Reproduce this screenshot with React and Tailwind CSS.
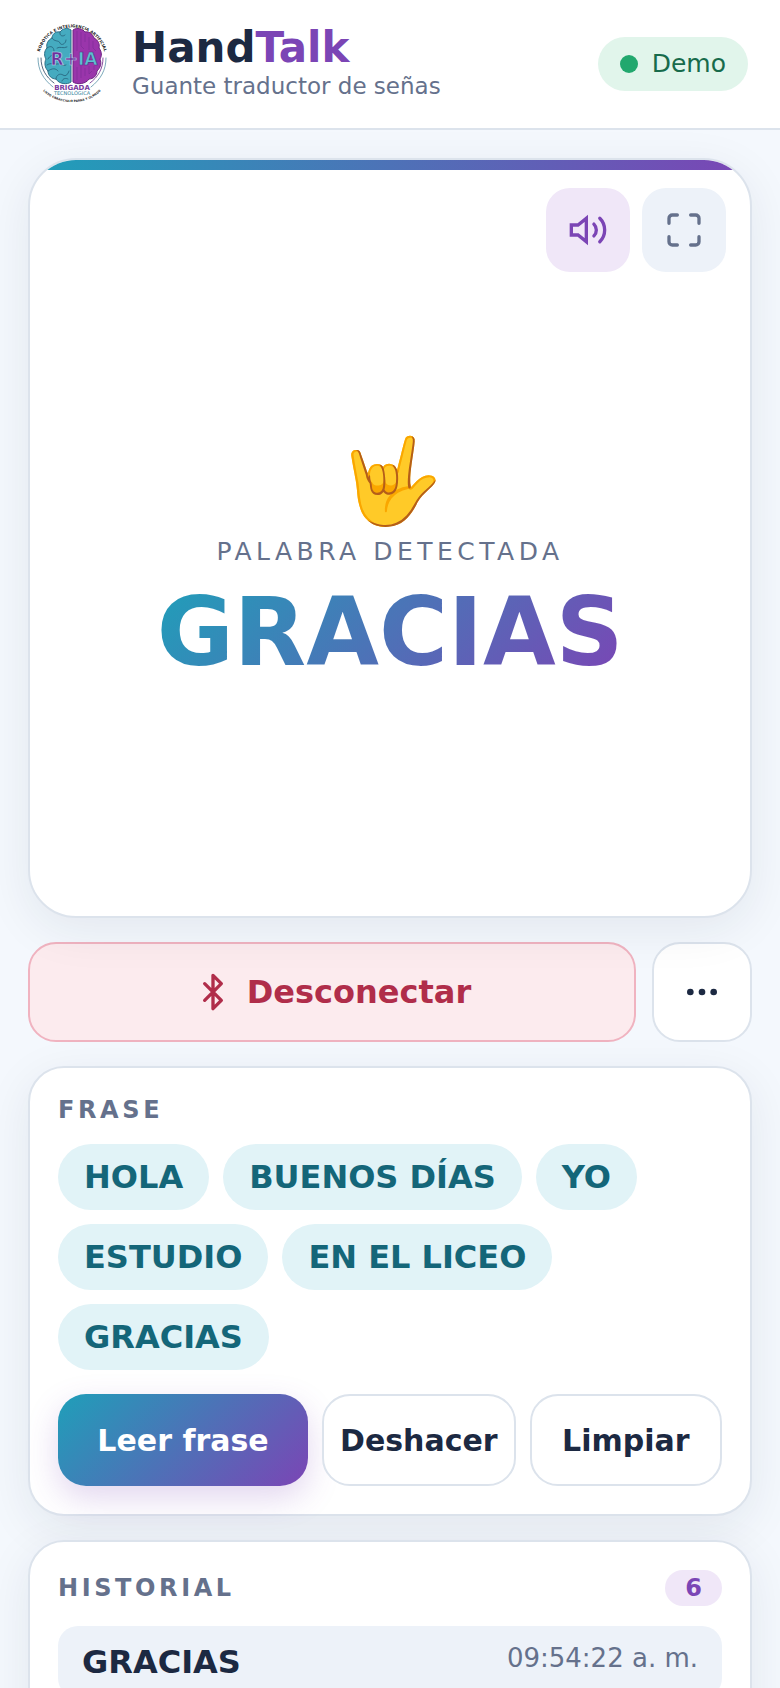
import { useState } from "react";

const initialWords = ["HOLA", "BUENOS DÍAS", "YO", "ESTUDIO", "EN EL LICEO", "GRACIAS"];

const initialHistory = [
  { word: "GRACIAS", time: "09:54:22 a. m." },
  { word: "EN EL LICEO", time: "09:54:20 a. m." },
  { word: "ESTUDIO", time: "09:54:18 a. m." },
  { word: "YO", time: "09:54:16 a. m." },
  { word: "BUENOS DÍAS", time: "09:54:14 a. m." },
  { word: "HOLA", time: "09:54:12 a. m." },
];

function Logo() {
  return (
    <svg viewBox="0 0 80 80" className="w-20 h-20 shrink-0" role="img" aria-label="Brigada Tecnológica">
      <defs>
        <path id="arcTop" d="M7 31 A33.5 33.5 0 0 1 73 31" />
        <path id="arcBottom" d="M6 59 C17 84.500 63 84.500 74 59" />
      </defs>

      {/* brain, left half */}
      <path
        d="M39 6 C35 3 30 5 28 8 C23 7 20 11 20 14 C16 16 14 20 15 24 C12 27 12 32 14 35 C12 39 13 44 16 47 C16 52 20 55 24 55 C27 60 35 61 39 58 Z"
        fill="#45abc0"
        stroke="#2b6f86"
        strokeWidth="1"
      />
      <g fill="none" stroke="#245f78" strokeWidth="0.8" strokeLinecap="round">
        <path d="M28 8 C27 12 31 13 33 11 M20 14 C22 18 27 16 28 19 S34 20 34 16 M15 24 C19 21 22 23 22 27 M25 24 C28 22 31 25 35 23" />
        <path d="M16 35 C18 31 21 32 22 29 M15 41 C19 38 22 41 25 40 S30 43 34 41 M16 47 C20 44 24 44 26 47 M24 55 C24 51 28 49 31 51 S36 50 37 47 M30 57 C31 54 34 54 36 55" />
      </g>

      {/* brain, right half */}
      <path
        d="M41 6 C45 3 51 5 53 8 C58 7 61 11 62 14 C66 16 68 20 67 24 C70 28 70 32 68 35 C70 40 68 44 65 47 C65 52 61 55 57 55 C54 60 45 61 41 58 Z"
        fill="#9a35ab"
        stroke="#6d2482"
        strokeWidth="1"
      />
      <g fill="none" stroke="#7a2b95" strokeWidth="0.6">
        <path d="M45 7 V27 M49 8 V22 L52 25 M53 10 V18 M57 13 V26 M61 17 V24 L64 27 M45 43 V56 M49 42 V54 M53 44 V52 M57 42 V50 L60 47 M62 42 V46" />
      </g>

      {/* side arcs */}
      <g fill="none" strokeLinecap="round">
        <path d="M6 34 C6 46 11 55 21 63" stroke="#5b93a8" strokeWidth="0.8" />
        <path d="M9 34 C9 45 14 53 22 59" stroke="#27405c" strokeWidth="0.8" />
        <path d="M74 34 C74 46 69 55 59 63" stroke="#5b93a8" strokeWidth="0.8" />
        <path d="M71 34 C71 45 66 53 58 59" stroke="#6a2386" strokeWidth="0.8" />
      </g>

      <g fontFamily="'DejaVu Sans', sans-serif" fontWeight="bold" textAnchor="middle">
        <text x="42" y="41" fontSize="17" strokeWidth="0.6">
          <tspan fill="#6f2f9b" stroke="#b9dbe8">R+</tspan>
          <tspan fill="#5cc0d0" stroke="#5a2b86">IA</tspan>
        </text>
        <text x="40" y="66" fontSize="7" fill="#7a3a9e">BRIGADA</text>
        <text x="40" y="71" fontSize="5" fontWeight="normal" fill="#2f7f9a">TECNOLÓGICA</text>
        <text fontSize="4" fill="#1b1b24">
          <textPath href="#arcTop" startOffset="50%">ROBÓTICA E INTELIGENCIA ARTIFICIAL</textPath>
        </text>
        <text fontSize="3" fill="#1b1b24">
          <textPath href="#arcBottom" startOffset="50%">LICEO CARACCIOLO PARRA Y OLMEDO</textPath>
        </text>
      </g>
    </svg>
  );
}

function VolumeIcon() {
  return (
    <svg viewBox="0 0 24 24" className="w-10 h-10" fill="none" stroke="currentColor" strokeWidth="2" strokeLinecap="round">
      <path d="M11 5 6 9H2v6h4l5 4V5z" />
      <path d="M15.54 8.46a5 5 0 0 1 0 7.07M19.07 4.93a10 10 0 0 1 0 14.14" />
    </svg>
  );
}

function FullscreenIcon() {
  return (
    <svg viewBox="0 0 24 24" className="w-10 h-10" fill="none" stroke="currentColor" strokeWidth="2" strokeLinecap="round">
      <path d="M8 3H5a2 2 0 0 0-2 2v3M16 3h3a2 2 0 0 1 2 2v3M8 21H5a2 2 0 0 1-2-2v-3M16 21h3a2 2 0 0 0 2-2v-3" />
    </svg>
  );
}

function BluetoothIcon() {
  return (
    <svg viewBox="0 0 24 24" className="w-10 h-10" fill="none" stroke="currentColor" strokeWidth="2" strokeLinecap="round" strokeLinejoin="round">
      <path d="m7 7 10 10-5 5V2l5 5L7 17" />
    </svg>
  );
}

function MoreIcon() {
  return (
    <svg viewBox="0 0 24 24" className="w-10 h-10" fill="currentColor">
      <circle cx="5" cy="12" r="2" />
      <circle cx="12" cy="12" r="2" />
      <circle cx="19" cy="12" r="2" />
    </svg>
  );
}

function App() {
  const [words, setWords] = useState(initialWords);
  const [connected, setConnected] = useState(true);
  const [sound, setSound] = useState(true);

  const speak = (text) => {
    if (!window.speechSynthesis) return;
    const msg = new SpeechSynthesisUtterance(text);
    msg.lang = "es-ES";
    window.speechSynthesis.speak(msg);
  };

  return (
    <div className="h-screen overflow-hidden bg-[#f4f8fd] text-[#1c2942] font-['DejaVu_Sans',sans-serif]">
      <header className="flex items-center gap-5 bg-white border-b-2 border-[#dce3ec] px-8 py-6">
        <Logo />
        <div className="flex-1 min-w-0 pb-0.5">
          <h1 className="text-[42px] leading-[46px] font-bold">
            Hand<span className="text-[#7b45b5]">Talk</span>
          </h1>
          <p className="text-[23px] leading-[30px] text-[#65718c]">Guante traductor de señas</p>
        </div>
        <div className="flex items-center gap-[14px] bg-[#e1f5eb] text-[#176b4b] rounded-full px-[22px] h-[54px] text-[25px]">
          <span className="w-[18px] h-[18px] rounded-full bg-[#22a86e]"></span>
          Demo
        </div>
      </header>

      <main className="flex flex-col gap-6 px-7 pt-7 pb-12">
        <section className="relative flex flex-col items-center justify-center min-h-[760px] pt-10 bg-white border-2 border-[#dce3ec] rounded-[48px] overflow-hidden shadow-[0_12px_48px_rgba(28,41,66,0.08)]">
          <div className="absolute top-0 inset-x-0 h-[10px] bg-linear-to-r/srgb from-[#1f9fb9] to-[#7b45b5]"></div>
          <div className="absolute top-7 right-6 flex gap-3">
            <button
              onClick={() => setSound(!sound)}
              aria-label="Sonido"
              className="w-[84px] h-[84px] rounded-3xl flex items-center justify-center bg-[#f0e7f8] text-[#7b45b5]"
            >
              <VolumeIcon />
            </button>
            <button
              aria-label="Pantalla completa"
              className="w-[84px] h-[84px] rounded-3xl flex items-center justify-center bg-[#edf2f9] text-[#65718c]"
            >
              <FullscreenIcon />
            </button>
          </div>

          <div className="text-[84px] leading-[96px]">🤟</div>
          <p className="mt-2 text-[25px] leading-[30px] tracking-[0.18em] text-[#65718c]">PALABRA DETECTADA</p>
          <h2 className="mt-4 text-[94px] leading-[100px] font-bold text-transparent bg-clip-text bg-linear-135/srgb from-[#1f9fb9] to-[#7b45b5]">
            GRACIAS
          </h2>
        </section>

        <div className="flex gap-4">
          <button
            onClick={() => setConnected(!connected)}
            className="flex-1 h-[100px] flex items-center justify-center gap-[14px] rounded-[28px] border-2 border-[#f0b3c0] bg-[#fcebee] text-[#b02d4a] text-[32px] font-bold"
          >
            <BluetoothIcon />
            {connected ? "Desconectar" : "Conectar"}
          </button>
          <button
            aria-label="Más opciones"
            className="w-[100px] h-[100px] flex items-center justify-center rounded-[28px] border-2 border-[#dce3ec] bg-white"
          >
            <MoreIcon />
          </button>
        </div>

        <section className="bg-white border-2 border-[#dce3ec] rounded-[36px] p-7 shadow-[0_12px_48px_rgba(28,41,66,0.08)]">
          <h3 className="text-2xl leading-7 font-bold tracking-[0.15em] text-[#65718c]">FRASE</h3>
          <div className="mt-5 flex flex-wrap gap-[14px]">
            {words.map((word, i) => (
              <span key={i} className="px-[26px] py-[14px] rounded-full bg-[#e1f3f7] text-[#146679] text-[32px] leading-[38px] font-bold">
                {word}
              </span>
            ))}
          </div>
          <div className="mt-6 grid grid-cols-[1.3fr_1fr_1fr] gap-[14px] text-[30px] font-bold">
            <button
              onClick={() => speak(words.join(" "))}
              className="h-[92px] px-4 rounded-[28px] text-white bg-linear-135/srgb from-[#1f9fb9] to-[#7b45b5] shadow-[0_12px_32px_rgba(123,69,181,0.22)]"
            >
              Leer frase
            </button>
            <button
              onClick={() => setWords(words.slice(0, -1))}
              className="h-[92px] px-4 rounded-[28px] border-2 border-[#dce3ec] bg-white"
            >
              Deshacer
            </button>
            <button
              onClick={() => setWords([])}
              className="h-[92px] px-4 rounded-[28px] border-2 border-[#dce3ec] bg-white"
            >
              Limpiar
            </button>
          </div>
        </section>

        <section className="bg-white border-2 border-[#dce3ec] rounded-[36px] p-7 shadow-[0_12px_48px_rgba(28,41,66,0.08)]">
          <div className="flex items-center justify-between">
            <h3 className="text-2xl leading-7 font-bold tracking-[0.15em] text-[#65718c]">HISTORIAL</h3>
            <span className="px-5 rounded-full bg-[#f0e7f8] text-[#7b45b5] text-2xl leading-9 font-bold">{initialHistory.length}</span>
          </div>
          <ul className="mt-5 flex flex-col gap-3">
            {initialHistory.map((item) => (
              <li key={item.word} className="flex items-start justify-between bg-[#edf2f9] rounded-[20px] px-6 py-4">
                <span className="text-[32px] leading-10 font-bold">{item.word}</span>
                <span className="text-[26px] leading-8 text-[#65718c]">{item.time}</span>
              </li>
            ))}
          </ul>
        </section>
      </main>
    </div>
  );
}

export default App;
